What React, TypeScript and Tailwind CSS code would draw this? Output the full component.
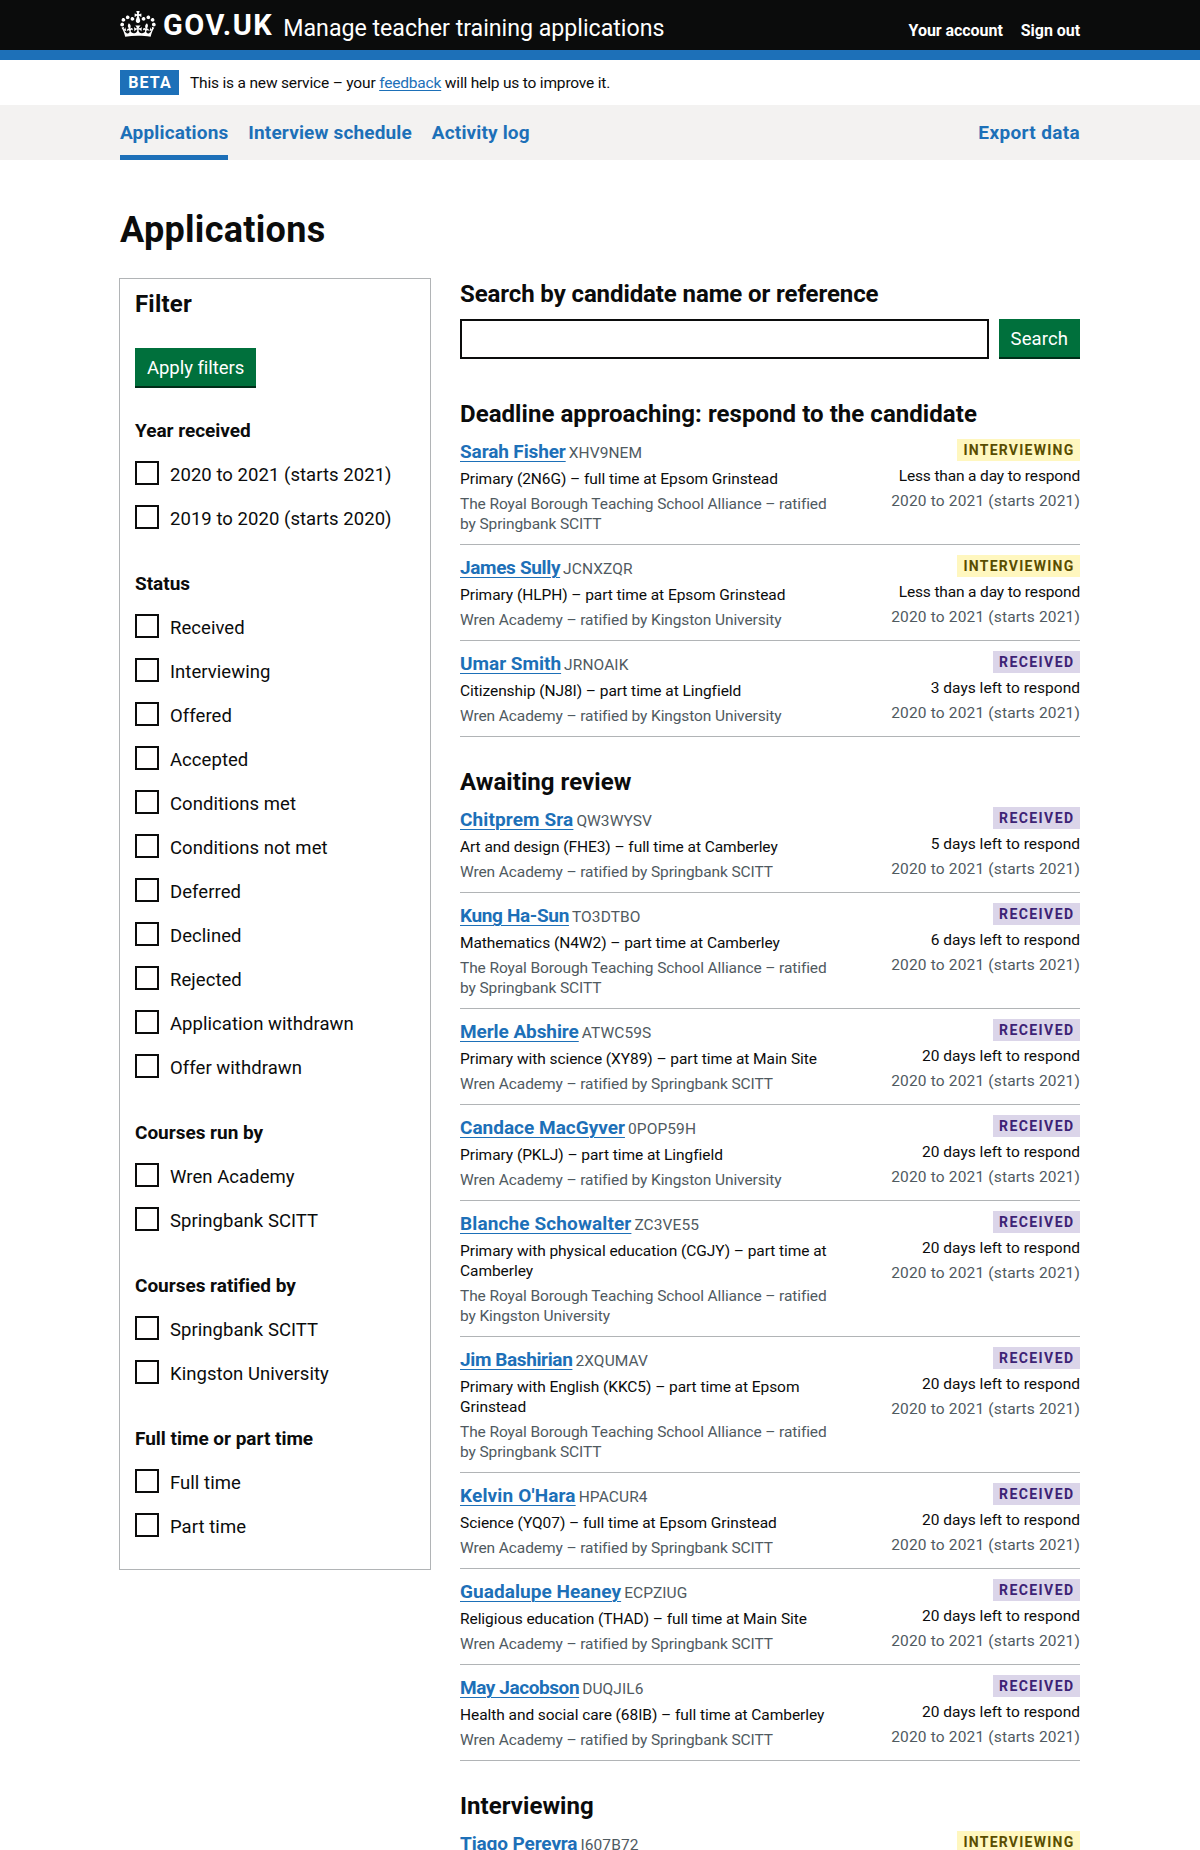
type Tag = "INTERVIEWING" | "RECEIVED";

type Application = {
  name: string;
  nameTracking?: string;
  reference: string;
  course?: string[];
  provider?: string[];
  tag: Tag;
  deadline?: string;
  year?: string;
};

const WREN_SPRINGBANK = ["Wren Academy – ratified by Springbank SCITT"];
const WREN_KINGSTON = ["Wren Academy – ratified by Kingston University"];
const ROYAL_SPRINGBANK = ["The Royal Borough Teaching School Alliance – ratified", "by Springbank SCITT"];
const ROYAL_KINGSTON = ["The Royal Borough Teaching School Alliance – ratified", "by Kingston University"];
const YEAR = "2020 to 2021 (starts 2021)";

const sections: { title: string; applications: Application[] }[] = [
  {
    title: "Deadline approaching: respond to the candidate",
    applications: [
      { name: "Sarah Fisher", nameTracking: "tracking-[-0.12px]", reference: "XHV9NEM", course: ["Primary (2N6G) – full time at Epsom Grinstead"], provider: ROYAL_SPRINGBANK, tag: "INTERVIEWING", deadline: "Less than a day to respond", year: YEAR },
      { name: "James Sully", nameTracking: "tracking-[-0.35px]", reference: "JCNXZQR", course: ["Primary (HLPH) – part time at Epsom Grinstead"], provider: WREN_KINGSTON, tag: "INTERVIEWING", deadline: "Less than a day to respond", year: YEAR },
      { name: "Umar Smith", reference: "JRNOAIK", course: ["Citizenship (NJ8I) – part time at Lingfield"], provider: WREN_KINGSTON, tag: "RECEIVED", deadline: "3 days left to respond", year: YEAR },
    ],
  },
  {
    title: "Awaiting review",
    applications: [
      { name: "Chitprem Sra", nameTracking: "tracking-[0.12px]", reference: "QW3WYSV", course: ["Art and design (FHE3) – full time at Camberley"], provider: WREN_SPRINGBANK, tag: "RECEIVED", deadline: "5 days left to respond", year: YEAR },
      { name: "Kung Ha-Sun", nameTracking: "tracking-[-0.35px]", reference: "TO3DTBO", course: ["Mathematics (N4W2) – part time at Camberley"], provider: ROYAL_SPRINGBANK, tag: "RECEIVED", deadline: "6 days left to respond", year: YEAR },
      { name: "Merle Abshire", nameTracking: "tracking-[-0.08px]", reference: "ATWC59S", course: ["Primary with science (XY89) – part time at Main Site"], provider: WREN_SPRINGBANK, tag: "RECEIVED", deadline: "20 days left to respond", year: YEAR },
      { name: "Candace MacGyver", reference: "0POP59H", course: ["Primary (PKLJ) – part time at Lingfield"], provider: WREN_KINGSTON, tag: "RECEIVED", deadline: "20 days left to respond", year: YEAR },
      { name: "Blanche Schowalter", nameTracking: "tracking-[0.12px]", reference: "ZC3VE55", course: ["Primary with physical education (CGJY) – part time at", "Camberley"], provider: ROYAL_KINGSTON, tag: "RECEIVED", deadline: "20 days left to respond", year: YEAR },
      { name: "Jim Bashirian", nameTracking: "tracking-[-0.38px]", reference: "2XQUMAV", course: ["Primary with English (KKC5) – part time at Epsom", "Grinstead"], provider: ROYAL_SPRINGBANK, tag: "RECEIVED", deadline: "20 days left to respond", year: YEAR },
      { name: "Kelvin O'Hara", nameTracking: "tracking-[0.15px]", reference: "HPACUR4", course: ["Science (YQ07) – full time at Epsom Grinstead"], provider: WREN_SPRINGBANK, tag: "RECEIVED", deadline: "20 days left to respond", year: YEAR },
      { name: "Guadalupe Heaney", nameTracking: "tracking-[0.06px]", reference: "ECPZIUG", course: ["Religious education (THAD) – full time at Main Site"], provider: WREN_SPRINGBANK, tag: "RECEIVED", deadline: "20 days left to respond", year: YEAR },
      { name: "May Jacobson", nameTracking: "tracking-[-0.42px]", reference: "DUQJIL6", course: ["Health and social care (68IB) – full time at Camberley"], provider: WREN_SPRINGBANK, tag: "RECEIVED", deadline: "20 days left to respond", year: YEAR },
    ],
  },
  {
    title: "Interviewing",
    applications: [{ name: "Tiago Pereyra", nameTracking: "tracking-[-0.12px]", reference: "I607B72", tag: "INTERVIEWING" }],
  },
];

const filters = [
  { title: "Year received", options: ["2020 to 2021 (starts 2021)", "2019 to 2020 (starts 2020)"] },
  {
    title: "Status",
    options: ["Received", "Interviewing", "Offered", "Accepted", "Conditions met", "Conditions not met", "Deferred", "Declined", "Rejected", "Application withdrawn", "Offer withdrawn"],
  },
  { title: "Courses run by", options: ["Wren Academy", "Springbank SCITT"] },
  { title: "Courses ratified by", options: ["Springbank SCITT", "Kingston University"] },
  { title: "Full time or part time", options: ["Full time", "Part time"] },
];

const tagStyles: Record<Tag, string> = {
  INTERVIEWING: "bg-[#fff7bf] text-[#594d00] tracking-[1.25px]",
  RECEIVED: "bg-[#dbd5e9] text-[#3d2375] tracking-[1.42px]",
};

function Crown() {
  return (
    <svg viewBox="0 0 132 97" className="h-[26px] w-9 shrink-0" fill="currentColor" aria-hidden="true">
      <path
        fillRule="evenodd"
        d="M25 30.2c3.5 1.5 7.7-.2 9.1-3.7 1.5-3.6-.2-7.8-3.9-9.2-3.6-1.4-7.6.3-9.1 3.9-1.4 3.5.3 7.5 3.9 9zM9 39.5c3.6 1.5 7.8-.2 9.2-3.7 1.5-3.6-.2-7.8-3.9-9.1-3.6-1.5-7.6.2-9.1 3.8-1.4 3.5.3 7.5 3.8 9zM4.4 57.2c3.5 1.5 7.7-.2 9.1-3.8 1.5-3.6-.2-7.7-3.9-9.1-3.5-1.5-7.6.3-9.1 3.8-1.4 3.5.3 7.6 3.9 9.1zm38.3-21.4c3.5 1.5 7.7-.2 9.1-3.8 1.5-3.6-.2-7.7-3.9-9.1-3.6-1.5-7.6.3-9.1 3.8-1.3 3.6.4 7.7 3.9 9.1zm64.4-5.6c-3.6 1.5-7.8-.2-9.1-3.7-1.5-3.6.2-7.8 3.8-9.2 3.6-1.4 7.7.3 9.2 3.9 1.3 3.5-.4 7.5-3.9 9zm15.9 9.3c-3.6 1.5-7.7-.2-9.1-3.7-1.5-3.6.2-7.8 3.7-9.1 3.6-1.5 7.7.2 9.2 3.8 1.5 3.5-.3 7.5-3.8 9zm4.7 17.7c-3.6 1.5-7.8-.2-9.2-3.8-1.5-3.6.2-7.7 3.9-9.1 3.6-1.5 7.7.3 9.2 3.8 1.3 3.5-.4 7.6-3.9 9.1zM89.3 35.8c-3.6 1.5-7.8-.2-9.2-3.8-1.4-3.6.2-7.7 3.9-9.1 3.6-1.5 7.7.3 9.2 3.8 1.4 3.6-.3 7.7-3.9 9.1zM69.7 17.7l8.9 4.7V9.3l-8.9 2.8c-.2-.3-.5-.6-.9-.9L72.4 0H59.6l3.5 11.2c-.3.3-.6.5-.9.9l-8.8-2.8v13.1l8.8-4.7c.3.3.6.7.9.9l-5 15.4v.1c-.2.8-.4 1.6-.4 2.4 0 4.1 3.1 7.5 7 8.1h.2c.3 0 .7.1 1 .1.4 0 .7 0 1-.1h.2c4-.6 7.1-4.1 7.1-8.1 0-.8-.1-1.7-.4-2.4V34l-5.1-15.4c.4-.2.7-.6 1-.9zM66 92.8c16.9 0 32.8 1.1 47.1 3.2 4-16.9 8.9-26.7 14-33.5l-9.6-3.4c1 4.9 1.1 7.2 0 10.2-1.5-1.4-3-4.3-4.2-8.7L108.6 76c2.8-2 5-3.2 7.5-3.3-4.4 9.4-10 11.9-13.6 11.2-4.3-.8-6.3-4.6-5.6-7.9 1-4.7 5.7-5.9 8-.5 4.3-8.7-3-11.4-7.6-8.8 7.1-7.2 7.9-13.5 2.1-21.1-8 6.1-8.1 12.3-4.5 20.8-4.7-5.4-12.1-2.5-9.5 6.2 3.4-5.2 7.9-2 7.2 3.1-.6 4.3-6.4 7.8-13.5 7.2-10.3-.9-10.9-8-11.2-13.8 2.5-.5 7.1 1.8 11 7.3L80.2 60c-4.1 4.4-8 5.3-12.3 5.4 1.4-4.4 8-11.6 8-11.6H55.5s6.4 7.2 7.9 11.6c-4.2-.1-8-1-12.3-5.4l1.4 16.4c3.9-5.5 8.5-7.7 10.9-7.3-.3 5.8-.9 12.8-11.1 13.8-7.2.6-12.9-2.9-13.5-7.2-.7-5 3.8-8.3 7.1-3.1 2.7-8.7-4.6-11.6-9.4-6.2 3.7-8.5 3.6-14.7-4.6-20.8-5.8 7.6-5 13.9 2.2 21.1-4.7-2.6-11.9.1-7.7 8.8 2.3-5.5 7.1-4.2 8.1.5.7 3.3-1.3 7.1-5.7 7.9-3.5.7-9-1.8-13.5-11.2 2.5.1 4.7 1.3 7.5 3.3l-4.7-15.4c-1.2 4.4-2.7 7.2-4.3 8.7-1.1-3-.9-5.3 0-10.2l-9.5 3.4c5 6.9 9.9 16.7 14 33.5 14.8-2.1 30.8-3.2 47.7-3.2z"
      />
    </svg>
  );
}

function Header() {
  return (
    <header className="h-[50px] bg-[#0b0c0c] text-white">
      <div className="mx-auto flex h-full w-[960px] items-start">
        <div className="flex pt-[11px]">
          <Crown />
        </div>
        <span className="ml-[7px] pt-[10px] text-[29px] leading-[30px] font-bold tracking-[1.5px]">GOV.UK</span>
        <span className="ml-[10px] pt-[13px] text-[23.2px] leading-[30px] tracking-[-0.02px]">Manage teacher training applications</span>
        <nav className="ml-auto flex gap-[18px] pt-[21px] text-[16px] leading-5 font-bold tracking-[-0.05px]">
          <a>Your account</a>
          <a>Sign out</a>
        </nav>
      </div>
    </header>
  );
}

function PhaseBanner() {
  return (
    <div className="mx-auto flex h-[45px] w-[960px] items-center pb-px">
      <strong className="flex h-[25px] w-[59px] items-center justify-center bg-[#1d70b8] pt-px pl-px text-[16px] leading-none font-bold tracking-[1.1px] text-white">
        BETA
      </strong>
      <span className="ml-[11px] pt-[2px] text-[15.5px] leading-5 tracking-[-0.18px]">
        This is a new service – your{" "}
        <a className="text-[#1d70b8] underline decoration-1 underline-offset-[2px]">feedback</a> will help us to improve it.
      </span>
    </div>
  );
}

function PrimaryNavigation() {
  return (
    <nav className="h-[55px] bg-[#f3f2f1] text-[19px] leading-[25px] font-bold tracking-[0.15px] text-[#1d70b8]">
      <div className="mx-auto flex h-full w-[960px] items-stretch gap-5">
        <a className="border-b-[5px] border-[#1d70b8] pt-[15px]">Applications</a>
        <a className="pt-[15px]">Interview schedule</a>
        <a className="pt-[15px]">Activity log</a>
        <a className="ml-auto pt-[15px] tracking-[0.35px]">Export data</a>
      </div>
    </nav>
  );
}

function Button({ children }: { children: string }) {
  return (
    <button className="h-10 border-b-2 border-[#002d18] bg-[#00703c] px-3 pt-[2px] text-[18.5px] leading-none text-white">
      {children}
    </button>
  );
}

function FilterPanel() {
  return (
    <aside className="-ml-px h-[1292px] w-[312px] shrink-0 border border-[#b1b4b6] px-[15px]">
      <h2 className="pt-[10px] text-[24px] leading-[30px] font-bold tracking-[0.2px]">Filter</h2>
      <div className="mt-[29px] mb-[30px] flex tracking-[-0.05px]">
        <Button>Apply filters</Button>
      </div>
      <div className="flex flex-col gap-8">
        {filters.map((group) => (
          <fieldset key={group.title}>
            <legend className="text-[19px] leading-[25px] font-bold tracking-[-0.02px]">{group.title}</legend>
            <div className="pt-2">
              {group.options.map((option) => (
                <label key={option} className="flex h-11 items-center">
                  <span className="size-6 shrink-0 border-2 border-[#0b0c0c]" />
                  <span className="ml-[11px] pt-[4px] text-[18.5px] leading-[25px] tracking-[0.05px]">{option}</span>
                </label>
              ))}
            </div>
          </fieldset>
        ))}
      </div>
    </aside>
  );
}

function ApplicationCard({ application }: { application: Application }) {
  const { name, nameTracking = "tracking-normal", reference, course, provider, tag, deadline, year } = application;
  return (
    <li className="flex justify-between border-b border-[#b1b4b6] py-[10px] text-[15.5px] leading-5 tracking-[-0.06px] whitespace-nowrap">
      <div className="flex flex-col gap-[5px]">
        <div className="flex h-[25px] items-baseline gap-[3px] leading-[25px]">
          <a className={`text-[19px] font-bold text-[#1d70b8] underline decoration-1 underline-offset-[3px] ${nameTracking}`}>{name}</a>
          <span className="tracking-[0.1px] text-[#505a5f]">{reference}</span>
        </div>
        {course && (
          <div>
            {course.map((line) => (
              <div key={line}>{line}</div>
            ))}
          </div>
        )}
        {provider && (
          <div className="tracking-[-0.1px] text-[#505a5f]">
            {provider.map((line) => (
              <div key={line}>{line}</div>
            ))}
          </div>
        )}
      </div>
      <div className="flex flex-col items-end">
        <strong className={`flex h-[22px] items-center pr-[5.5px] pl-[6.5px] text-[14px] leading-none font-bold ${tagStyles[tag]}`}>
          {tag}
        </strong>
        {deadline && (
          <span className={tag === "INTERVIEWING" ? "mt-[5px] tracking-[-0.15px]" : "mt-[5px] tracking-[0.02px]"}>{deadline}</span>
        )}
        {year && <span className="mt-[5px] tracking-[0.16px] text-[#505a5f]">{year}</span>}
      </div>
    </li>
  );
}

function Results() {
  return (
    <section className="w-[620px]">
      <h2 className="mt-px text-[24px] leading-[30px] font-bold tracking-[-0.1px]">Search by candidate name or reference</h2>
      <div className="mt-[10px] flex gap-[10px]">
        <input className="h-10 min-w-0 flex-1 border-2 border-[#0b0c0c] bg-white" />
        <div className="flex tracking-[0.1px]">
          <Button>Search</Button>
        </div>
      </div>
      <div className="mt-10 flex flex-col gap-[30px]">
        {sections.map((section) => (
          <div key={section.title}>
            <h2 className="text-[24px] leading-[30px] font-bold tracking-[0.05px]">{section.title}</h2>
            <ul>
              {section.applications.map((application) => (
                <ApplicationCard key={application.reference} application={application} />
              ))}
            </ul>
          </div>
        ))}
      </div>
    </section>
  );
}

export default function App() {
  return (
    <div className="h-[1850px] overflow-hidden bg-white font-['Roboto',sans-serif] text-[#0b0c0c]">
      <Header />
      <div className="h-[10px] bg-[#1d70b8]" />
      <PhaseBanner />
      <PrimaryNavigation />
      <main className="mx-auto w-[960px] pt-[50px]">
        <h1 className="text-[36px] leading-10 font-bold tracking-[0.3px]">Applications</h1>
        <div className="mt-7 flex justify-between">
          <FilterPanel />
          <Results />
        </div>
      </main>
    </div>
  );
}
